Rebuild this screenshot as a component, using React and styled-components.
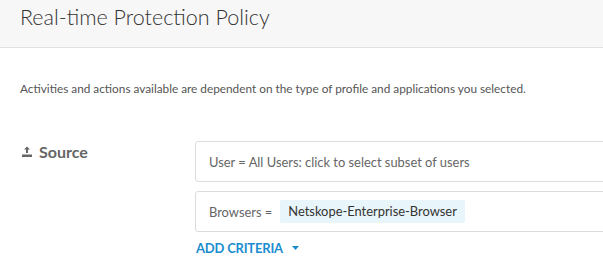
import React from 'react';
import styled, { createGlobalStyle } from 'styled-components';

const GlobalStyle = createGlobalStyle`
  html, body {
    margin: 0;
    padding: 0;
    background: #fff;
    font-family: Lato, "Open Sans", sans-serif;
    overflow: hidden;
  }
`;

// Page header
const Header = styled.header`
  height: 47px;
  background: #f7f7f7;
  border-bottom: 1px solid #e1e1e1;
  padding: 0 20px;
  box-sizing: content-box;
`;

const Title = styled.h1`
  margin: 0;
  padding-top: 3px;
  font-size: 21.5px;
  font-weight: 300;
  line-height: 28px;
  color: #333;
`;

const Body = styled.main`
  padding: 33px 0 0 20px;
`;

const Note = styled.p`
  margin: 0 0 44px;
  font-size: 11.8px;
  line-height: 16px;
  color: #555;
`;

const Section = styled.section`
  display: flex;
  align-items: flex-start;
`;

const Label = styled.div`
  width: 175px;
  flex-shrink: 0;
  display: flex;
  align-items: center;
  gap: 7px;
  padding: 1px 0 0 2px;
  box-sizing: border-box;
  font-size: 16px;
  font-weight: 700;
  color: #666;
`;

const Criteria = styled.div`
  flex: 1;
  display: flex;
  flex-direction: column;
  gap: 9px;
  margin-right: -20px;
`;

const Field = styled.div`
  height: 41px;
  box-sizing: border-box;
  border: 1px solid #dcdcdc;
  border-radius: 3px;
  display: flex;
  align-items: center;
  padding: 0 13px;
  font-size: 12.9px;
  color: #666;
  cursor: pointer;
`;

const FieldKey = styled.span`
  margin-right: 8px;
`;

const Chip = styled.span`
  background: #e8f5fb;
  border-radius: 2px;
  padding: 3px 8px;
  line-height: 17px;
  color: #333;
`;

const AddButton = styled.button`
  align-self: flex-start;
  margin-top: -1px;
  padding: 0 0 0 1px;
  border: 0;
  background: none;
  font-family: inherit;
  font-size: 13px;
  font-weight: 700;
  letter-spacing: -0.2px;
  color: #1b8dcf;
  display: flex;
  align-items: center;
  gap: 9px;
  cursor: pointer;
`;

const UploadIcon = () => (
  <svg width="10" height="11" viewBox="0 0 10 11">
    <path d="M5 0.5 L8 3.5 H6 V7 H4 V3.5 H2 Z" fill="#666" />
    <rect x="0" y="8.5" width="10" height="2.5" fill="#666" />
  </svg>
);

const Caret = () => (
  <svg width="7" height="4" viewBox="0 0 7 4">
    <path d="M0 0 H7 L3.5 4 Z" fill="#1b8dcf" />
  </svg>
);

export default function App() {
  return (
    <>
      <GlobalStyle />
      <Header>
        <Title>Real-time Protection Policy</Title>
      </Header>
      <Body>
        <Note>
          Activities and actions available are dependent on the type of profile and applications you selected.
        </Note>
        <Section>
          <Label>
            <UploadIcon />
            Source
          </Label>
          <Criteria>
            <Field>User = All Users: click to select subset of users</Field>
            <Field>
              <FieldKey>Browsers =</FieldKey>
              <Chip>Netskope-Enterprise-Browser</Chip>
            </Field>
            <AddButton>
              ADD CRITERIA
              <Caret />
            </AddButton>
          </Criteria>
        </Section>
      </Body>
    </>
  );
}
